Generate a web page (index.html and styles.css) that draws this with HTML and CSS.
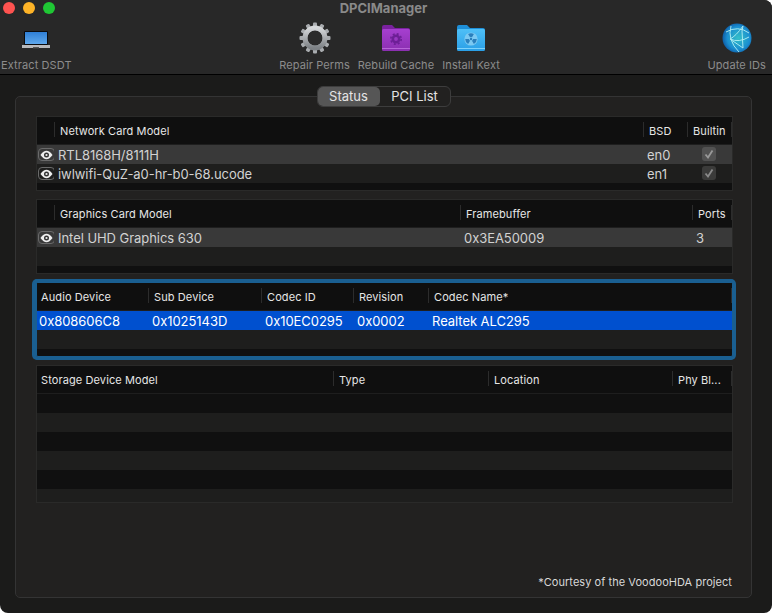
FILE: index.html

```html
<!DOCTYPE html>
<html lang="en">
<head>
    <meta charset="UTF-8">
    <meta name="viewport" content="width=device-width, initial-scale=1.0">
    <title>DPCIManager</title>
    <link rel="stylesheet" href="styles.css">
</head>
<body>
<div class="window">
    <header class="chrome">
        <div class="titlebar">
            <div class="lights">
                <span class="light red"></span>
                <span class="light yellow"></span>
                <span class="light green"></span>
            </div>
            <div class="title">DPCIManager</div>
            <div></div>
        </div>
        <div class="toolbar">
            <div class="tool">
                <svg class="icon" viewBox="0 0 32 32">
                    <defs>
                        <linearGradient id="screen" x1="0" y1="0" x2="0" y2="1">
                            <stop offset="0" stop-color="#2f7fd6"/>
                            <stop offset="1" stop-color="#5fa8ec"/>
                        </linearGradient>
                    </defs>
                    <rect x="4" y="9" width="24" height="14" rx="1.2" fill="#0b0b0d"/>
                    <rect x="5" y="10" width="22" height="12" fill="url(#screen)"/>
                    <rect x="2" y="23" width="28" height="3" fill="#b9b9bb"/>
                    <rect x="13" y="25" width="6" height="1.4" fill="#555"/>
                </svg>
                <span class="tool-label">Extract DSDT</span>
            </div>
            <div class="tool-group">
                <div class="tool">
                    <svg class="icon" viewBox="0 0 32 32">
                        <defs>
                            <linearGradient id="steel" x1="0" y1="0" x2="0" y2="1">
                                <stop offset="0" stop-color="#d6d8da"/>
                                <stop offset="1" stop-color="#7d8185"/>
                            </linearGradient>
                        </defs>
                        <g fill="#a9acaf">
                            <rect x="14" y="0.5" width="4" height="8" rx="1"/>
                            <rect x="14" y="0.5" width="4" height="8" rx="1" transform="rotate(30 16 16)"/>
                            <rect x="14" y="0.5" width="4" height="8" rx="1" transform="rotate(60 16 16)"/>
                            <rect x="14" y="0.5" width="4" height="8" rx="1" transform="rotate(90 16 16)"/>
                            <rect x="14" y="0.5" width="4" height="8" rx="1" transform="rotate(120 16 16)"/>
                            <rect x="14" y="0.5" width="4" height="8" rx="1" transform="rotate(150 16 16)"/>
                            <rect x="14" y="0.5" width="4" height="8" rx="1" transform="rotate(180 16 16)"/>
                            <rect x="14" y="0.5" width="4" height="8" rx="1" transform="rotate(210 16 16)"/>
                            <rect x="14" y="0.5" width="4" height="8" rx="1" transform="rotate(240 16 16)"/>
                            <rect x="14" y="0.5" width="4" height="8" rx="1" transform="rotate(270 16 16)"/>
                            <rect x="14" y="0.5" width="4" height="8" rx="1" transform="rotate(300 16 16)"/>
                            <rect x="14" y="0.5" width="4" height="8" rx="1" transform="rotate(330 16 16)"/>
                        </g>
                        <circle cx="16" cy="16" r="10" fill="none" stroke="url(#steel)" stroke-width="5"/>
                        <circle cx="16" cy="16" r="7.2" fill="#2b2b2b"/>
                    </svg>
                    <span class="tool-label">Repair Perms</span>
                </div>
                <div class="tool">
                    <svg class="icon" viewBox="0 0 32 32">
                        <defs>
                            <linearGradient id="purple" x1="0" y1="0" x2="0" y2="1">
                                <stop offset="0" stop-color="#a63fd0"/>
                                <stop offset="1" stop-color="#8a2fb0"/>
                            </linearGradient>
                        </defs>
                        <path d="M2 5 q0-2 2-2 h8 l3 3 h13 q2 0 2 2 v4 H2z" fill="#7a219f"/>
                        <rect x="2" y="7" width="28" height="22" rx="1.5" fill="url(#purple)"/>
                        <rect x="2" y="26" width="28" height="1" fill="#b765d8"/>
                        <circle cx="16" cy="17" r="3.2" fill="none" stroke="#6d1f96" stroke-width="2.6"/>
                        <circle cx="16" cy="17" r="5.2" fill="none" stroke="#6d1f96" stroke-width="1.6" stroke-dasharray="2 2.1"/>
                    </svg>
                    <span class="tool-label">Rebuild Cache</span>
                </div>
                <div class="tool">
                    <svg class="icon" viewBox="0 0 32 32">
                        <defs>
                            <linearGradient id="blue" x1="0" y1="0" x2="0" y2="1">
                                <stop offset="0" stop-color="#4fc0f7"/>
                                <stop offset="1" stop-color="#2a9fe6"/>
                            </linearGradient>
                        </defs>
                        <path d="M2 5 q0-2 2-2 h8 l3 3 h13 q2 0 2 2 v4 H2z" fill="#1e8fd8"/>
                        <rect x="2" y="7" width="28" height="22" rx="1.5" fill="url(#blue)"/>
                        <rect x="2" y="26" width="28" height="1" fill="#7fd3fa"/>
                        <circle cx="16" cy="17" r="6.6" fill="#7cc9f2"/>
                        <g fill="#2a7fbc">
                            <circle cx="16" cy="17" r="1.2"/>
                            <path d="M13.1 11.98 A5.8 5.8 0 0 1 18.9 11.98 L17 15.27 A2 2 0 0 0 15 15.27z"/>
                            <path d="M13.1 11.98 A5.8 5.8 0 0 1 18.9 11.98 L17 15.27 A2 2 0 0 0 15 15.27z" transform="rotate(120 16 17)"/>
                            <path d="M13.1 11.98 A5.8 5.8 0 0 1 18.9 11.98 L17 15.27 A2 2 0 0 0 15 15.27z" transform="rotate(240 16 17)"/>
                        </g>
                    </svg>
                    <span class="tool-label">Install Kext</span>
                </div>
            </div>
            <div class="tool">
                <svg class="icon" viewBox="0 0 32 32">
                    <defs>
                        <radialGradient id="globe" cx="0.55" cy="0.5" r="0.6">
                            <stop offset="0" stop-color="#35c0c8"/>
                            <stop offset="0.65" stop-color="#1a8ed0"/>
                            <stop offset="1" stop-color="#0b4f9a"/>
                        </radialGradient>
                    </defs>
                    <circle cx="16" cy="16" r="14.5" fill="url(#globe)"/>
                    <g fill="none" stroke="#b5f2f5" stroke-width="1" opacity="0.9">
                        <path d="M5 10 q12-7 23 1"/>
                        <path d="M10 4 q-4 14 8 26"/>
                        <path d="M22 4 q-7 10-13 13 l13 9 l-1-17z"/>
                        <path d="M9 17 q9 4 19-2"/>
                    </g>
                </svg>
                <span class="tool-label">Update IDs</span>
            </div>
        </div>
    </header>

    <main class="content">
        <section class="panel">
            <div class="tabs">
                <span class="tab active">Status</span>
                <span class="tab">PCI List</span>
            </div>

            <!-- network -->
            <div class="table">
                <div class="row head cols-net">
                    <div class="cell"></div>
                    <div class="cell">Network Card Model</div>
                    <div class="cell">BSD</div>
                    <div class="cell">Builtin</div>
                    <div class="cell"></div>
                </div>
                <div class="row gray cols-net">
                    <div class="cell"><span class="eye"><svg viewBox="0 0 14 10"><path d="M0.5 5 Q7 -4 13.500 5 Q7 14 0.5 5z" fill="#eee"/><circle cx="7" cy="5" r="2.700" fill="#333"/><circle cx="7" cy="5" r="1.200" fill="#eee"/></svg></span></div>
                    <div class="cell">RTL8168H/8111H</div>
                    <div class="cell">en0</div>
                    <div class="cell"><span class="check"><svg viewBox="0 0 14 14"><path d="M3.500 7.500 L6 10.500 L10.500 3.500" fill="none" stroke="#999" stroke-width="1.800"/></svg></span></div>
                    <div class="cell"></div>
                </div>
                <div class="row alt cols-net">
                    <div class="cell"><span class="eye"><svg viewBox="0 0 14 10"><path d="M0.5 5 Q7 -4 13.500 5 Q7 14 0.5 5z" fill="#eee"/><circle cx="7" cy="5" r="2.700" fill="#333"/><circle cx="7" cy="5" r="1.200" fill="#eee"/></svg></span></div>
                    <div class="cell">iwlwifi-QuZ-a0-hr-b0-68.ucode</div>
                    <div class="cell">en1</div>
                    <div class="cell"><span class="check"><svg viewBox="0 0 14 14"><path d="M3.500 7.500 L6 10.500 L10.500 3.500" fill="none" stroke="#8a8a8a" stroke-width="1.800"/></svg></span></div>
                    <div class="cell"></div>
                </div>
            </div>

            <!-- graphics -->
            <div class="table">
                <div class="row head cols-gfx">
                    <div class="cell"></div>
                    <div class="cell">Graphics Card Model</div>
                    <div class="cell">Framebuffer</div>
                    <div class="cell">Ports</div>
                    <div class="cell"></div>
                </div>
                <div class="row gray cols-gfx">
                    <div class="cell"><span class="eye"><svg viewBox="0 0 14 10"><path d="M0.5 5 Q7 -4 13.500 5 Q7 14 0.5 5z" fill="#eee"/><circle cx="7" cy="5" r="2.700" fill="#333"/><circle cx="7" cy="5" r="1.200" fill="#eee"/></svg></span></div>
                    <div class="cell">Intel UHD Graphics 630</div>
                    <div class="cell">0x3EA50009</div>
                    <div class="cell">3</div>
                    <div class="cell"></div>
                </div>
                <div class="row alt cols-gfx"></div>
            </div>

            <!-- audio -->
            <div class="table focused">
                <div class="row head cols-audio">
                    <div class="cell">Audio Device</div>
                    <div class="cell">Sub Device</div>
                    <div class="cell">Codec ID</div>
                    <div class="cell">Revision</div>
                    <div class="cell">Codec Name*</div>
                    <div class="cell"></div>
                </div>
                <div class="row selected cols-audio">
                    <div class="cell">0x808606C8</div>
                    <div class="cell">0x1025143D</div>
                    <div class="cell">0x10EC0295</div>
                    <div class="cell">0x0002</div>
                    <div class="cell">Realtek ALC295</div>
                    <div class="cell"></div>
                </div>
                <div class="row alt cols-audio"></div>
            </div>

            <!-- storage -->
            <div class="table tall">
                <div class="row head cols-storage">
                    <div class="cell">Storage Device Model</div>
                    <div class="cell">Type</div>
                    <div class="cell">Location</div>
                    <div class="cell">Phy Bl...</div>
                    <div class="cell"></div>
                </div>
                <div class="row"></div>
                <div class="row alt"></div>
                <div class="row"></div>
                <div class="row alt"></div>
                <div class="row"></div>
                <div class="row alt"></div>
            </div>

            <div class="note">*Courtesy of the VoodooHDA project</div>
        </section>
    </main>
</div>
</body>
</html>
```

FILE: styles.css

```css
* {
    box-sizing: border-box;
}
body {
    margin: 0;
    background-color: #fff;
    font-family: Inter, "Liberation Sans", Arial, sans-serif;
}
.window {
    width: 772px;
    height: 613px;
    display: flex;
    flex-direction: column;
    background-color: #1b1b1a;
    border-radius: 0 8px 8px 8px;
    overflow: hidden;
}

/* title bar + toolbar */
.chrome {
    height: 75px;
    flex: none;
    background-color: #282828;
    border-bottom: 1px solid #000;
}
.titlebar {
    height: 16px;
    display: grid;
    grid-template-columns: 1fr auto 1fr;
    align-items: center;
    padding: 0 8px 0 3px;
}
.lights {
    display: flex;
    gap: 8px;
}
.light {
    width: 12px;
    height: 12px;
    border-radius: 50%;
}
.red { background-color: #fe5350; }
.yellow { background-color: #fdb327; }
.green { background-color: #1fc734; }
.title {
    font-size: 13px;
    font-weight: 700;
    color: #8a8a8a;
}
.toolbar {
    display: flex;
    justify-content: space-between;
    padding: 6px 6px 0 1px;
}
.tool-group {
    display: flex;
    gap: 8px;
}
.tool {
    display: flex;
    flex-direction: column;
    align-items: center;
}
.icon {
    width: 32px;
    height: 32px;
}
.tool-label {
    margin-top: 4px;
    font-size: 11px;
    letter-spacing: 0.1px;
    line-height: 14px;
    color: #8c8c8c;
    white-space: nowrap;
}

/* main area */
.content {
    flex: 1;
    padding: 21px 20px 15px 15px;
}
.panel {
    height: 502px;
    display: flex;
    flex-direction: column;
    gap: 8px;
    padding: 0 18px 8px 20px;
    background-color: #222120;
    border: 1px solid #343434;
    border-radius: 5px;
}
.tabs {
    display: flex;
    align-self: center;
    width: 134px;
    height: 21px;
    margin: -11px 0 1px -2px;
    background-color: #222120;
    border: 1px solid #3d3d3d;
    border-radius: 6px;
    font-size: 13px;
    line-height: 19px;
    color: #e4e4e4;
}
.tab {
    flex: 1;
    text-align: center;
}
.tab.active {
    flex: none;
    width: 62px;
    background-color: #565656;
    border-radius: 5px;
}

/* tables */
.table {
    height: 75px;
    flex: none;
    background-color: #101010;
    border: 1px solid #2a2a29;
    overflow: hidden;
}
.table.tall {
    height: 138px;
}
.table.focused {
    border-color: #1a5f91;
    border-radius: 2px;
    box-shadow: 0 0 0 3px #1a5f91, -1px 0 0 3px #1a5f91;
}
.row {
    height: 19px;
    display: grid;
    font-size: 13px;
    letter-spacing: -0.05px;
    line-height: 20px;
    color: #d2d2d2;
}
.row.gray { background-color: #393939; }
.row.alt { background-color: #1e1e1d; }
.row.selected {
    background-color: #0050cf;
    color: #fff;
}
.row.head {
    height: 28px;
    padding-bottom: 1px;
    background-color: #0f0f0f;
    border-bottom: 1px solid #1e1e1e;
    font-size: 11px;
    letter-spacing: 0.1px;
    line-height: 28px;
    color: #e6e6e6;
}
.cols-net { grid-template-columns: 17px 589px 44px 44px 1fr; }
.cols-gfx { grid-template-columns: 17px 406px 232px 39px 1fr; }
.cols-audio { grid-template-columns: 111px 113px 92px 75px 303px 1fr; }
.cols-storage { grid-template-columns: 296px 155px 184px 59px 1fr; }
.cell {
    padding-left: 4px;
    white-space: nowrap;
    overflow: hidden;
}
.head .cell {
    position: relative;
    padding-left: 6px;
}
/* short column divider, not full height of the header */
.head .cell + .cell::before {
    content: "";
    position: absolute;
    left: 0;
    top: 5px;
    bottom: 6px;
    width: 1px;
    background-color: #2c2c2c;
}
.cols-audio .cell:first-child,
.cols-storage .cell:first-child {
    padding-left: 2px;
}
.head.cols-audio .cell:first-child,
.head.cols-storage .cell:first-child {
    padding-left: 4px;
}
.eye {
    display: flex;
    align-items: center;
    justify-content: center;
    width: 17px;
    height: 13px;
    margin: 3px 0 0 -3px;
    border: 1px solid #6a6a6a;
    border-radius: 4px;
}
.eye svg {
    width: 13px;
    height: 10px;
}
.check {
    display: block;
    width: 14px;
    height: 14px;
    margin: 2px 0 0 11px;
    background-color: rgba(255, 255, 255, 0.13);
    border-radius: 3px;
}
.check svg {
    display: block;
}
.note {
    margin-top: auto;
    padding-right: 1px;
    text-align: right;
    font-size: 11px;
    letter-spacing: 0.05px;
    line-height: 14px;
    color: #d8d8d8;
}
```
